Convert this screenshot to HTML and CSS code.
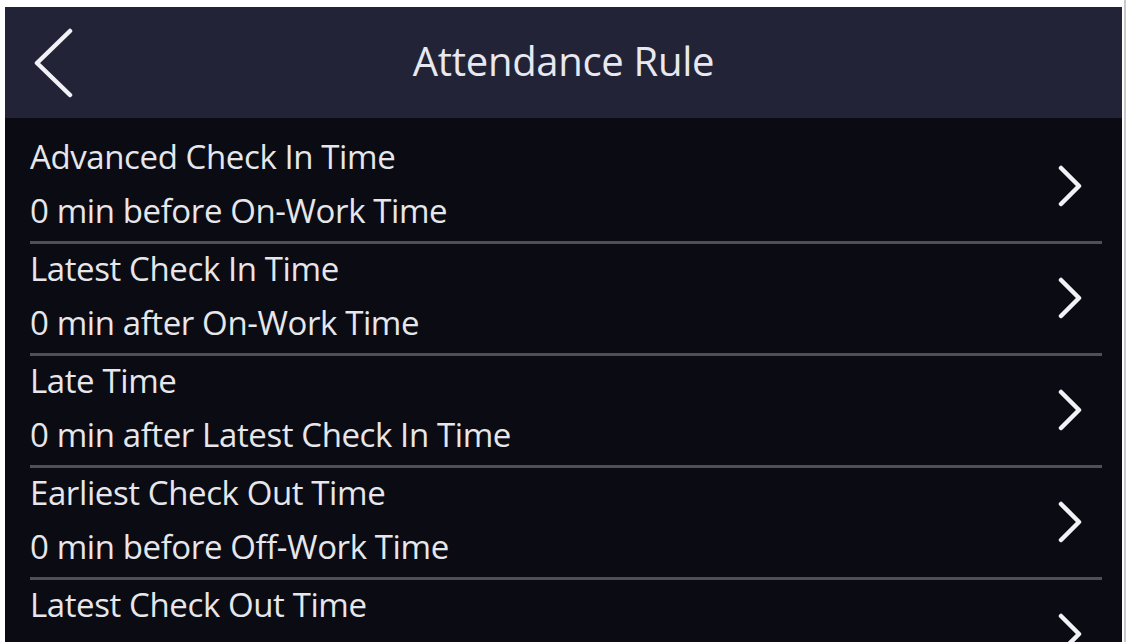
FILE: index.html
```html
<!DOCTYPE html>
<html lang="en">
<head>
    <meta charset="UTF-8">
    <title>Attendance Rule</title>
    <link rel="stylesheet" href="styles.css">
</head>
<body>
    <div class="screen">
        <div class="header">
            <a href="#" class="back-btn">
                <svg width="44" height="72" viewBox="0 0 44 72">
                    <polyline points="38,3 5,35 38,67" fill="none" stroke="#f2f2f6" stroke-width="4.5" stroke-linecap="round" stroke-linejoin="round"/>
                </svg>
            </a>
            <h1 class="title">Attendance Rule</h1>
            <div></div>
        </div>

        <div class="rule-list">
            <div class="rule-item">
                <div class="rule-text">
                    <div class="rule-name">Advanced Check In Time</div>
                    <div class="rule-value">0 min before On-Work Time</div>
                </div>
                <svg class="arrow" width="28" height="42" viewBox="0 0 28 42"><polyline points="4,3 22,21 4,39" fill="none" stroke="#f2f2f6" stroke-width="4.5" stroke-linecap="round" stroke-linejoin="round"/></svg>
            </div>

            <div class="rule-item">
                <div class="rule-text">
                    <div class="rule-name">Latest Check In Time</div>
                    <div class="rule-value">0 min after On-Work Time</div>
                </div>
                <svg class="arrow" width="28" height="42" viewBox="0 0 28 42"><polyline points="4,3 22,21 4,39" fill="none" stroke="#f2f2f6" stroke-width="4.5" stroke-linecap="round" stroke-linejoin="round"/></svg>
            </div>

            <div class="rule-item">
                <div class="rule-text">
                    <div class="rule-name">Late Time</div>
                    <div class="rule-value">0 min after Latest Check In Time</div>
                </div>
                <svg class="arrow" width="28" height="42" viewBox="0 0 28 42"><polyline points="4,3 22,21 4,39" fill="none" stroke="#f2f2f6" stroke-width="4.5" stroke-linecap="round" stroke-linejoin="round"/></svg>
            </div>

            <div class="rule-item">
                <div class="rule-text">
                    <div class="rule-name">Earliest Check Out Time</div>
                    <div class="rule-value">0 min before Off-Work Time</div>
                </div>
                <svg class="arrow" width="28" height="42" viewBox="0 0 28 42"><polyline points="4,3 22,21 4,39" fill="none" stroke="#f2f2f6" stroke-width="4.5" stroke-linecap="round" stroke-linejoin="round"/></svg>
            </div>

            <div class="rule-item">
                <div class="rule-text">
                    <div class="rule-name">Latest Check Out Time</div>
                </div>
                <svg class="arrow" width="28" height="42" viewBox="0 0 28 42"><polyline points="4,3 22,21 4,39" fill="none" stroke="#f2f2f6" stroke-width="4.5" stroke-linecap="round" stroke-linejoin="round"/></svg>
            </div>
        </div>
    </div>
</body>
</html>
```

FILE: styles.css
```css
* {
    margin: 0;
    padding: 0;
    box-sizing: border-box;
}

html, body {
    height: 100%;
    overflow: hidden;
}

body {
    background-color: #fff;
    padding: 7px 2px 0 5px;
    border-right: 2px solid #c9c9cc;
    font-family: 'Open Sans', 'Noto Sans', sans-serif;
    color: #e6e6eb;
}

.screen {
    height: 100%;
    background-color: #0a0b13;
    overflow: hidden;
}

.header {
    height: 111px;
    background-color: #222337;
    display: grid;
    grid-template-columns: 1fr auto 1fr;
    align-items: center;
}

.back-btn {
    display: flex;
    padding-left: 27px;
    padding-top: 2px;
}

.title {
    font-size: 40px;
    font-weight: normal;
    letter-spacing: -0.3px;
    color: #e8e8f0;
    margin-top: -4px;
}

.rule-list {
    padding-top: 14px;
}

.rule-item {
    display: flex;
    align-items: center;
    margin: 0 20px 0 25px;
    padding-right: 17px;
    border-bottom: 3px solid #4e4f57;
    height: 112px;
}

.rule-text {
    flex: 1;
    align-self: flex-start;
    margin-top: -2px;
    font-size: 33px;
    line-height: 54px;
    letter-spacing: -0.4px;
}

.arrow {
    flex-shrink: 0;
    margin-top: -2px;
}
```
